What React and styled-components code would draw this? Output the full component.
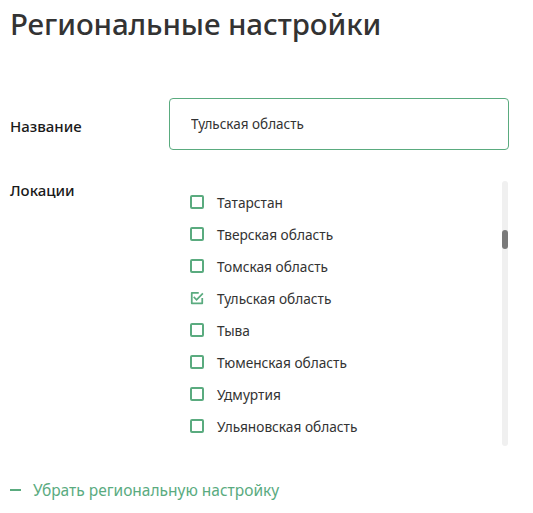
import React, { Component } from 'react'
import styled, { createGlobalStyle } from 'styled-components'

const regions = [
  { name: 'Татарстан' },
  { name: 'Тверская область' },
  { name: 'Томская область' },
  { name: 'Тульская область', checked: true },
  { name: 'Тыва' },
  { name: 'Тюменская область' },
  { name: 'Удмуртия' },
  { name: 'Ульяновская область' },
]

export default class App extends Component {
  render() {
    return (
      <Page>
        <GlobalStyle />
        <Title>Региональные настройки</Title>
        <Form>
          <Label>Название</Label>
          <Input defaultValue="Тульская область" />
          <Label top>Локации</Label>
          <ListBox>
            <List>
              {regions.map(r => (
                <Item key={r.name}>
                  <Check checked={r.checked} />
                  <ItemText>{r.name}</ItemText>
                </Item>
              ))}
            </List>
            <Track>
              <Thumb />
            </Track>
          </ListBox>
        </Form>
        <RemoveLink>
          <Dash />
          Убрать региональную настройку
        </RemoveLink>
      </Page>
    )
  }
}

const Check = ({ checked }) => (
  <CheckBox>
    {checked ? (
      <svg width="16" height="16" viewBox="0 0 16 16" fill="none">
        <path
          d="M10 2H2v12h12V8"
          stroke="#5aab7f"
          strokeWidth="2"
          strokeLinejoin="round"
        />
        <path
          d="M5 7.5l2.5 2.5L14 3.5"
          stroke="#5aab7f"
          strokeWidth="2"
          strokeLinecap="square"
        />
      </svg>
    ) : (
      <Box />
    )}
  </CheckBox>
)

const GlobalStyle = createGlobalStyle`
  body {
    margin: 0;
    background: #fff;
    font-family: "Noto Sans", "Open Sans", sans-serif;
  }
`

const Page = styled.div`
  width: 533px;
  height: 513px;
  box-sizing: border-box;
  padding: 4px 10px 0 10px;
`

const Title = styled.h1`
  margin: 0;
  font-size: 29.5px;
  line-height: 40px;
  font-weight: 500;
  color: #333333;
  letter-spacing: -0.1px;
`

const Form = styled.div`
  display: grid;
  grid-template-columns: 159px 340px;
  row-gap: 31px;
  align-items: center;
  margin-top: 54px;
`

const Label = styled.div`
  font-size: 15px;
  line-height: 18px;
  font-weight: 500;
  color: #1a1a1a;
  align-self: ${props => (props.top ? 'start' : 'center')};
  ${props => !props.top && 'padding-top: 4px;'}
`

const Input = styled.input`
  box-sizing: border-box;
  height: 52px;
  width: 340px;
  border: 1px solid #5aab7f;
  border-radius: 4px;
  padding: 0 21px;
  font-family: inherit;
  font-size: 13.5px;
  color: #333333;
  outline: none;
`

const ListBox = styled.div`
  display: flex;
  height: 265px;
`

const List = styled.div`
  flex: 1;
  overflow: hidden;
  padding: 5px 0 0 21px;
`

const Item = styled.div`
  display: flex;
  align-items: center;
  height: 32px;
  gap: 13px;
`

const CheckBox = styled.span`
  display: inline-flex;
  width: 14px;
  height: 14px;
  align-items: center;
  justify-content: center;
`

const Box = styled.span`
  box-sizing: border-box;
  width: 14px;
  height: 14px;
  border: 2px solid #5aab7f;
  border-radius: 2px;
`

const ItemText = styled.span`
  font-size: 13.7px;
  color: #333333;
`

const Track = styled.div`
  width: 6px;
  margin-right: 1px;
  background: #f0f0f0;
  border-radius: 3px;
`

const Thumb = styled.div`
  width: 6px;
  height: 19px;
  margin-top: 49px;
  background: #7a7a7a;
  border-radius: 3px;
`

const RemoveLink = styled.div`
  display: flex;
  align-items: center;
  gap: 12px;
  margin-top: 33px;
  font-size: 15.5px;
  color: #5aab7f;
  cursor: pointer;
`

const Dash = styled.span`
  width: 11px;
  height: 2px;
  background: #5aab7f;
`
